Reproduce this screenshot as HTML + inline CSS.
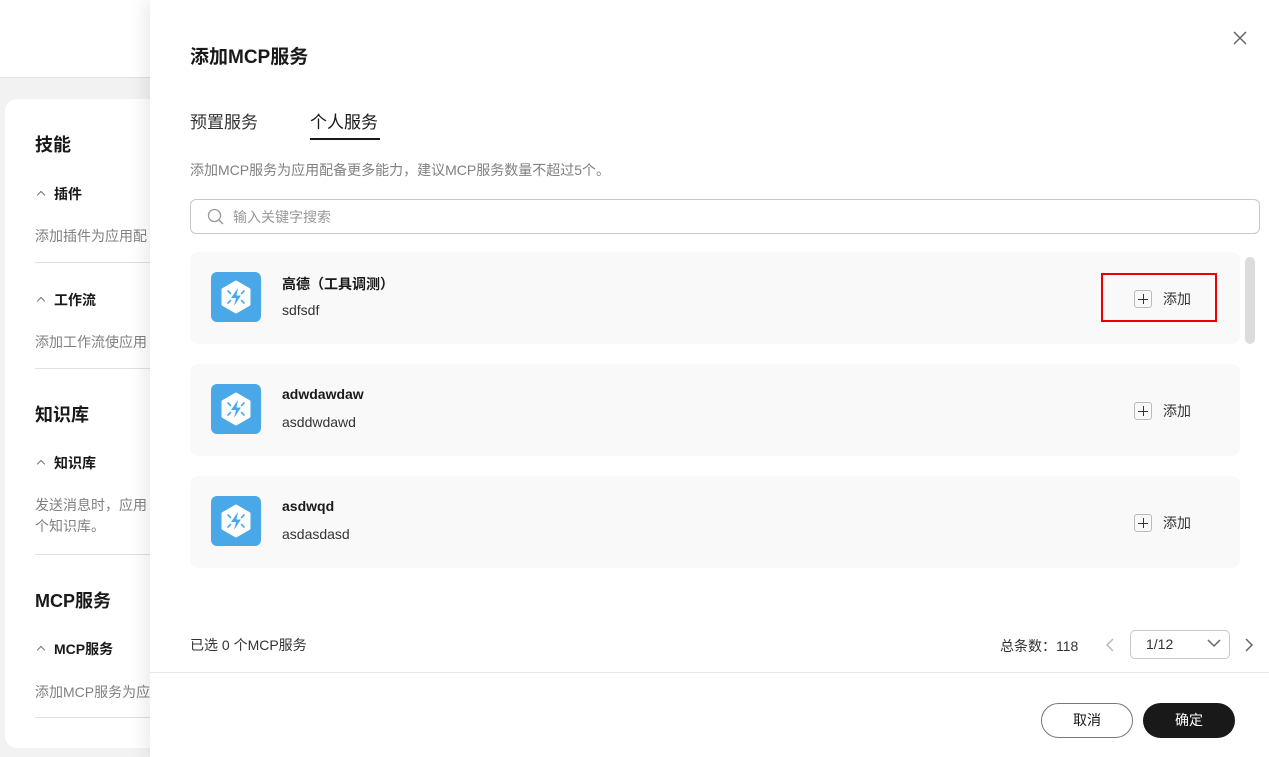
<!DOCTYPE html>
<html><head><meta charset="utf-8"><style>
*{box-sizing:border-box;margin:0;padding:0}
body{width:1269px;height:757px;overflow:hidden;background:#f2f2f2;font-family:"Liberation Sans","Noto Sans CJK SC",sans-serif;position:relative;color:#191919}
.top{position:absolute;left:0;top:0;width:1269px;height:78px;background:#fff;border-bottom:1px solid #e0e0e0}
.card{position:absolute;left:5px;top:99px;width:200px;height:649px;background:#fff;border-radius:12px}
.abs{position:absolute;white-space:nowrap}
.h{font-size:18px;font-weight:bold}
.s{font-size:14px;font-weight:bold}
.d{font-size:14px;color:#808080}
.hr{position:absolute;left:35px;width:120px;height:1px;background:#e0e0e0}
.car{display:inline-block;width:6px;height:6px;border-left:1.3px solid #777;border-top:1.3px solid #777;transform:rotate(45deg);margin:0 10px 0 3px;vertical-align:1px}
.drawer{position:absolute;left:150px;top:0;width:1119px;height:757px;background:#fff;box-shadow:-6px 0 16px rgba(0,0,0,.08)}
.item{position:absolute;left:40px;width:1050px;height:92px;background:#f9f9f9;border-radius:8px}
.icon{position:absolute;left:21px;top:20px;width:50px;height:50px;border-radius:6px;background:#4aa8e8}
.icon svg{position:absolute;left:0;top:0}
.t{position:absolute;left:92px;top:22px;font-size:14px;font-weight:bold}
.st{position:absolute;left:92px;top:50px;font-size:14px;color:#333}
.add{position:absolute;left:944px;top:37px;font-size:14px;color:#333}
.plus{display:inline-block;width:18px;height:18px;border:1px solid #bbb;border-radius:3px;position:relative;vertical-align:-4px;margin-right:11px}
.plus:before{content:"";position:absolute;left:3px;top:8px;width:10px;height:1px;background:#333}
.plus:after{content:"";position:absolute;left:8px;top:3px;width:1px;height:10px;background:#333}
</style></head><body>
<div class="top"></div>
<div class="card"></div>
<div class="abs h" style="left:35px;top:131px">技能</div>
<div class="abs s" style="left:35px;top:184px"><span class="car"></span>插件</div>
<div class="abs d" style="left:35px;top:226px">添加插件为应用配</div>
<div class="hr" style="top:262px"></div>
<div class="abs s" style="left:35px;top:290px"><span class="car"></span>工作流</div>
<div class="abs d" style="left:35px;top:332px">添加工作流使应用</div>
<div class="hr" style="top:368px"></div>
<div class="abs h" style="left:35px;top:401px">知识库</div>
<div class="abs s" style="left:35px;top:453px"><span class="car"></span>知识库</div>
<div class="abs d" style="left:35px;top:495px;line-height:21px">发送消息时，应用<br>个知识库。</div>
<div class="hr" style="top:554px"></div>
<div class="abs h" style="left:35px;top:587px">MCP服务</div>
<div class="abs s" style="left:35px;top:639px"><span class="car"></span>MCP服务</div>
<div class="abs d" style="left:35px;top:682px">添加MCP服务为应</div>
<div class="hr" style="top:717px"></div>

<div class="drawer">
<div class="abs" style="left:40px;top:42px;font-size:19px;font-weight:bold">添加MCP服务</div>
<svg class="abs" style="left:1083px;top:31px" width="14" height="14"><path d="M1 1L13 13M13 1L1 13" stroke="#666" stroke-width="1.5"/></svg>
<div class="abs" style="left:40px;top:108px;font-size:17px;color:#333">预置服务</div>
<div class="abs" style="left:160px;top:108px;font-size:17px;color:#191919">个人服务</div>
<div class="abs" style="left:160px;top:138px;width:70px;height:2px;background:#191919"></div>
<div class="abs" style="left:40px;top:160px;font-size:14px;color:#808080">添加MCP服务为应用配备更多能力，建议MCP服务数量不超过5个。</div>
<div class="abs" style="left:40px;top:199px;width:1070px;height:35px;border:1px solid #c8c8c8;border-radius:6px"></div>
<svg class="abs" style="left:57px;top:208px" width="17" height="17"><circle cx="7.5" cy="7.5" r="6" fill="none" stroke="#999" stroke-width="1.3"/><path d="M12 12L16 16" stroke="#999" stroke-width="1.3"/></svg>
<div class="abs" style="left:83px;top:207px;font-size:14px;color:#999">输入关键字搜索</div>

<div class="item" style="top:252px"><div class="icon"><svg width="50" height="50"><use href="#ic"/></svg></div><div class="t">高德（工具调测）</div><div class="st">sdfsdf</div><div class="add"><span class="plus"></span>添加</div>
<div class="abs" style="left:911px;top:21px;width:116px;height:49px;border:2px solid #e00"></div></div>
<div class="item" style="top:364px"><div class="icon"><svg width="50" height="50"><use href="#ic"/></svg></div><div class="t">adwdawdaw</div><div class="st">asddwdawd</div><div class="add"><span class="plus"></span>添加</div></div>
<div class="item" style="top:476px"><div class="icon"><svg width="50" height="50"><use href="#ic"/></svg></div><div class="t">asdwqd</div><div class="st">asdasdasd</div><div class="add"><span class="plus"></span>添加</div></div>
<div class="abs" style="left:1095px;top:257px;width:10px;height:87px;background:#dcdcdc;border-radius:5px"></div>

<div class="abs" style="left:40px;top:635px;font-size:14px;color:#333">已选 0 个MCP服务</div>
<div class="abs" style="left:850px;top:636px;font-size:14px;color:#333">总条数：118</div>
<svg class="abs" style="left:955px;top:638px" width="10" height="14"><path d="M8 1L2 7L8 13" fill="none" stroke="#bbb" stroke-width="1.5"/></svg>
<div class="abs" style="left:980px;top:630px;width:100px;height:29px;border:1px solid #c8c8c8;border-radius:5px"></div>
<div class="abs" style="left:996px;top:636px;font-size:14px;color:#333">1/12</div>
<svg class="abs" style="left:1057px;top:639px" width="14" height="9"><path d="M1 1L7 7L13 1" fill="none" stroke="#666" stroke-width="1.5"/></svg>
<svg class="abs" style="left:1094px;top:638px" width="10" height="14"><path d="M2 1L8 7L2 13" fill="none" stroke="#666" stroke-width="1.5"/></svg>
<div class="abs" style="left:0;top:672px;width:1119px;height:1px;background:#e8e8e8"></div>
<div class="abs" style="left:891px;top:703px;width:92px;height:35px;border:1px solid #777;border-radius:18px;text-align:center;line-height:33px;font-size:14px">取消</div>
<div class="abs" style="left:993px;top:703px;width:92px;height:35px;background:#191919;border-radius:18px;text-align:center;line-height:35px;font-size:14px;color:#fff">确定</div>
</div>
<svg width="0" height="0" style="position:absolute"><defs><g id="ic">
<path d="M25 10 L38 17.5 L38 32.5 L25 40 L12 32.5 L12 17.5 Z" fill="#fff" stroke="#fff" stroke-width="3" stroke-linejoin="round"/>
<path d="M27 16 L20 26 L25 26 L23 34 L30 23.5 L25.5 23.5 Z" fill="#4aa8e8"/>
<path d="M17 19 L19.5 21.5 M33 19 L30.5 21.5 M17 31 L19.5 28.5 M33 31 L30.5 28.5" stroke="#4aa8e8" stroke-width="1.6" stroke-linecap="round"/>
</g></defs></svg>
</body></html>
